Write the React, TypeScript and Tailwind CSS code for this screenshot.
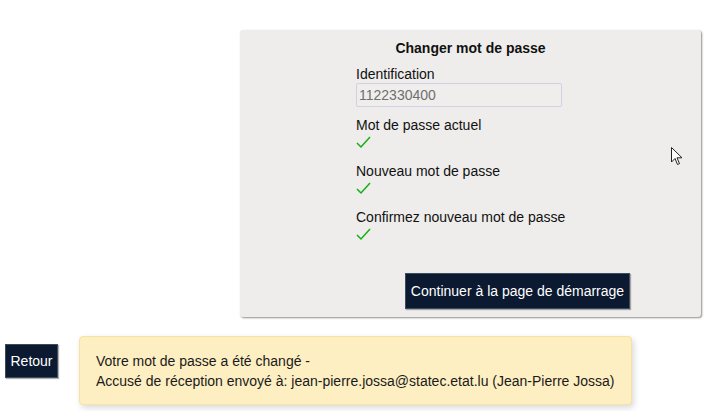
import React from "react";

function Check() {
  return (
    <svg width="16" height="16" viewBox="0 0 16 16" className="block">
      <path d="M1 9 L5 13 L14 3" fill="none" stroke="#12b012" strokeWidth="1.5" />
    </svg>
  );
}

function Group({ label }: { label: string }) {
  return (
    <div className="mb-[13px]">
      <div className="h-[17px] leading-[17px] text-[14px] text-[#111]">{label}</div>
      <div className="h-[16px]">
        <Check />
      </div>
    </div>
  );
}

export default function App() {
  return (
    <div className="relative w-[717px] h-[411px] bg-white overflow-hidden" style={{ fontFamily: '"Liberation Sans", Arial, sans-serif' }}>
      <div className="pt-[30px] pl-[240px]">
        <div className="flex flex-col w-[461px] bg-[#eeedeb] rounded-[3px] shadow-[1px_1px_2px_rgba(0,0,0,0.45)] pt-[8px] pb-[8px]">
          <div className="h-[20px] leading-[20px] text-center text-[14px] font-bold text-[#111] mb-[8px]">Changer mot de passe</div>
          <div className="flex flex-col ml-[116px]">
            <div className="h-[17px] leading-[17px] text-[14px] text-[#111]">Identification</div>
            <div className="w-[206px] h-[24px] border border-[#cfd2e3] rounded-[2px] bg-[#efeeec] pl-[2px] leading-[22px] text-[14px] text-[#6f6f6f] mb-[10px]">1122330400</div>
            <Group label="Mot de passe actuel" />
            <Group label="Nouveau mot de passe" />
            <Group label="Confirmez nouveau mot de passe" />
          </div>
          <div className="ml-[165px] mt-[18px]">
            <button className="w-[225px] h-[36px] bg-[#0b1a30] border border-[#3d4b5e] text-white text-[14px] leading-[34px] text-center shadow-[1px_1px_1px_rgba(0,0,0,0.3)]">
              Continuer à la page de démarrage
            </button>
          </div>
        </div>
      </div>
      <div className="flex items-start mt-[19px]">
        <button className="ml-[5px] mt-[8px] w-[53px] h-[34px] bg-[#0b1a30] border border-[#3d4b5e] text-white text-[14px] leading-[32px] text-center shadow-[1px_1px_1px_rgba(0,0,0,0.3)]">
          Retour
        </button>
        <div className="ml-[21px] w-[553px] h-[69px] bg-[#fdefc2] border border-[#f7e1a3] rounded-[4px] shadow-[2px_3px_6px_rgba(0,0,0,0.15)] pl-[16px] pt-[14px] text-[14px] leading-[20px] text-[#1a1a1a]">
          <div>Votre mot de passe a été changé -</div>
          <div>Accusé de réception envoyé à: jean-pierre.jossa@statec.etat.lu (Jean-Pierre Jossa)</div>
        </div>
      </div>
      <svg className="absolute left-[671px] top-[147px]" width="13" height="20" viewBox="0 0 13 20">
        <path d="M0.5 0.5 L0.5 15 L4 11.5 L6.5 17.5 L8.5 16.6 L6 10.8 L11 10.8 Z" fill="#fff" stroke="#222" strokeWidth="1" strokeLinejoin="round" />
      </svg>
    </div>
  );
}
